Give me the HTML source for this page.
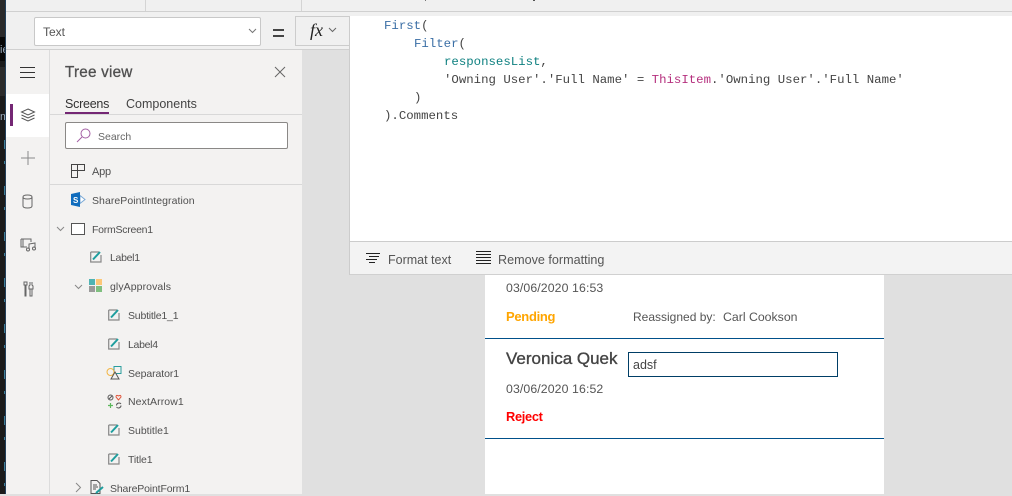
<!DOCTYPE html>
<html><head><meta charset="utf-8">
<style>
html,body{margin:0;padding:0}
body{width:1012px;height:494px;overflow:hidden;position:relative;background:#e0e0e0;font-family:"Liberation Sans",sans-serif;color:#444}
.a{position:absolute}
.t{position:absolute;white-space:nowrap;font-size:11px;line-height:14px;color:#505050}
.c{position:absolute;white-space:pre;font-family:"Liberation Mono",monospace;font-size:12.36px;line-height:18px;color:#444;left:384px}
svg{position:absolute;overflow:visible}
</style></head><body>
<!-- left strip -->
<div class="a" style="left:0;top:0;width:6px;height:494px;background:#1b1b1b"></div>
<div class="a" style="left:0;top:0;width:6px;height:37px;background:#2a2a2a"></div>
<div class="a" style="left:0;top:37px;width:6px;height:24px;background:#080808"></div>
<div class="a" style="left:0;top:67px;width:6px;height:29px;background:#2b2b2b"></div>
<div class="t" style="left:0;top:43px;font-size:11px;color:#9ab;width:6px;overflow:hidden">ie</div>
<div class="t" style="left:0;top:110px;font-size:11px;color:#9ab;width:6px;overflow:hidden">m</div>
<div class="a" style="left:4px;top:140px;width:1px;height:354px;background:repeating-linear-gradient(to bottom,#3f7f99 0 9px,#1b1b1b 9px 21px,#3f7f99 21px 24px,#1b1b1b 24px 46px)"></div>
<div class="a" style="left:5px;top:0;width:1px;height:494px;background:#23405a"></div>
<!-- top bars -->
<div class="a" style="left:6px;top:0;width:1006px;height:49px;background:#f0f0f0"></div>
<div class="a" style="left:6px;top:11px;width:1006px;height:1px;background:#d0d0d0"></div>
<div class="a" style="left:145px;top:0;width:1px;height:11px;background:#d4d4d4"></div>
<div class="a" style="left:301px;top:0;width:1px;height:11px;background:#d4d4d4"></div>
<div class="a" style="left:425px;top:0;width:1px;height:1px;background:#777"></div>
<div class="a" style="left:533px;top:0;width:2px;height:1px;background:#555"></div>
<div class="a" style="left:6px;top:49px;width:344px;height:1px;background:#d0d0d0"></div>
<!-- property dropdown -->
<div class="a" style="left:34px;top:17px;width:225px;height:27px;background:#fff;border:1px solid #c8c8c8;border-radius:2px"></div>
<div class="t" style="left:43px;top:25px;font-size:12px;color:#555">Text</div>
<svg style="left:248px;top:28px" width="10" height="6"><path d="M1 1L4.500 4.500L8 1" fill="none" stroke="#777"/></svg>
<div class="a" style="left:273px;top:29px;width:11px;height:2px;background:#444"></div>
<div class="a" style="left:273px;top:35px;width:11px;height:2px;background:#444"></div>
<div class="a" style="left:295px;top:16px;width:54px;height:28px;background:#f0f0f0;border:1px solid #ccc;box-sizing:content-box"></div>
<div class="a" style="left:310px;top:20px;font:italic 18px/20px 'Liberation Serif',serif;color:#222">fx</div>
<svg style="left:328px;top:27px" width="10" height="6"><path d="M1 1L4.500 4.500L8 1" fill="none" stroke="#666"/></svg>
<!-- icon rail -->
<div class="a" style="left:6px;top:50px;width:44px;height:444px;background:#f3f2f1"></div>
<div class="a" style="left:49px;top:50px;width:1px;height:444px;background:#dcdcdc"></div>
<div class="a" style="left:6px;top:94px;width:43px;height:43px;background:#fff"></div>
<div class="a" style="left:10px;top:104px;width:3px;height:22px;background:#742774"></div>
<svg style="left:20px;top:67px" width="15" height="11"><path d="M0 .5H15M0 5.500H15M0 10.500H15" stroke="#333" fill="none"/></svg>
<svg style="left:20px;top:108px" width="16" height="15"><path d="M8 1L14.500 4L8 7L1.500 4ZM1.500 7L8 10L14.500 7M1.500 10L8 13L14.500 10" fill="none" stroke="#555"/></svg>
<svg style="left:20px;top:150px" width="16" height="16"><path d="M8 1V15M1 8H15" stroke="#8a8a8a" fill="none"/></svg>
<svg style="left:21px;top:194px" width="13" height="15"><path d="M2 3V12Q2 14 6.500 14Q11 14 11 12V3M2 3Q2 1 6.500 1Q11 1 11 3Q11 5 6.500 5Q2 5 2 3Z" fill="none" stroke="#666"/></svg>
<svg style="left:20px;top:238px" width="17" height="14"><path d="M1 1H11V4M1 1V9H7M3 1V9M9 11V6L15 5V10" fill="none" stroke="#666"/><circle cx="8" cy="11.500" r="1.500" fill="none" stroke="#666"/><circle cx="14" cy="10.500" r="1.500" fill="none" stroke="#666"/></svg>
<svg style="left:23px;top:281px" width="11" height="16"><path d="M1 1H4V4H3V15H2V4H1ZM7 1V4L6 5V8H10V5L9 4V1M7 8V15H9V8" fill="none" stroke="#666"/></svg>
<!-- tree panel -->
<div class="a" style="left:50px;top:50px;width:252px;height:444px;background:#f3f2f1"></div>
<div class="a" style="left:302px;top:50px;width:48px;height:444px;background:#e0e0e0"></div>
<div class="t" style="left:65px;top:64px;font-size:15.300px;line-height:18px;color:#505050;letter-spacing:.2px;-webkit-text-stroke:.3px #505050">Tree view</div>
<svg style="left:274px;top:66px" width="12" height="12"><path d="M1 1L11 11M11 1L1 11" stroke="#666" fill="none"/></svg>
<div class="t" style="left:65px;top:96px;font-size:12.500px;line-height:16px;color:#333;letter-spacing:-.25px">Screens</div>
<div class="t" style="left:126px;top:96px;font-size:12.500px;line-height:16px;color:#444">Components</div>
<div class="a" style="left:50px;top:114px;width:252px;height:1px;background:#d8d8d8"></div>
<div class="a" style="left:65px;top:112px;width:44px;height:2px;background:#742774"></div>
<div class="a" style="left:65px;top:122px;width:221px;height:25px;background:#fff;border:1px solid #8a8886;border-radius:2px"></div>
<svg style="left:76px;top:128px" width="15" height="15"><circle cx="9.500" cy="5.500" r="4.500" fill="none" stroke="#a35fa3"/><path d="M6 9L1 14" stroke="#a35fa3" fill="none"/></svg>
<div class="t" style="left:98px;top:130px;font-size:10.500px;color:#666">Search</div>
<svg style="left:71px;top:164px" width="14" height="14"><path d="M.5 6.500H13.500V.5H.5V13.500H6.500V.5" fill="none" stroke="#444"/></svg>
<div class="t" style="left:92px;top:165px;letter-spacing:-.2px">App</div>
<div class="a" style="left:50px;top:184px;width:252px;height:1px;background:#d8d8d8"></div>
<svg style="left:71px;top:192px" width="15" height="15"><path d="M9 3.500L14 7.500L9 11.500Z" fill="#fff" stroke="#7aa9d6"/><path d="M0 2L9 0V15L0 13Z" fill="#0f6cbd"/><text x="2" y="11" font-size="8" font-weight="bold" fill="#fff" font-family="Liberation Sans">S</text></svg>
<div class="t" style="left:92px;top:194px;font-size:10.500px;letter-spacing:.05px">SharePointIntegration</div>
<svg style="left:56px;top:226px" width="10" height="6"><path d="M1 1L4.500 4.500L8 1" fill="none" stroke="#888"/></svg>
<div class="a" style="left:71px;top:223px;width:12px;height:10px;background:#fff;border:1px solid #555"></div>
<div class="t" style="left:92px;top:223px;font-size:10.500px;letter-spacing:-.25px">FormScreen1</div>
<svg style="left:90px;top:250px" width="13" height="13"><path d="M.7 2H9M.7 2V12H11V5" fill="none" stroke="#888" stroke-width="1.200"/><path d="M3 9.500L10 2" stroke="#1f9e9e" stroke-width="2" fill="none"/></svg>
<div class="t" style="left:110px;top:251px;font-size:10.500px;letter-spacing:-.3px">Label1</div>
<svg style="left:74px;top:284px" width="10" height="6"><path d="M1 1L4.500 4.500L8 1" fill="none" stroke="#888"/></svg>
<div class="a" style="left:89px;top:279px;width:6px;height:6px;background:#4fb3b3"></div>
<div class="a" style="left:96px;top:279px;width:6px;height:6px;background:#fcc777"></div>
<div class="a" style="left:89px;top:286px;width:6px;height:6px;background:#9a9a9a"></div>
<div class="a" style="left:96px;top:286px;width:6px;height:6px;background:#7fbf7f"></div>
<div class="t" style="left:110px;top:280px;font-size:10.500px;letter-spacing:.08px">glyApprovals</div>
<svg style="left:108px;top:308px" width="13" height="13"><path d="M.7 2H9M.7 2V12H11V5" fill="none" stroke="#888" stroke-width="1.200"/><path d="M3 9.500L10 2" stroke="#1f9e9e" stroke-width="2" fill="none"/></svg>
<div class="t" style="left:128px;top:309px;font-size:10.500px;letter-spacing:-.2px">Subtitle1_1</div>
<svg style="left:108px;top:337px" width="13" height="13"><path d="M.7 2H9M.7 2V12H11V5" fill="none" stroke="#888" stroke-width="1.200"/><path d="M3 9.500L10 2" stroke="#1f9e9e" stroke-width="2" fill="none"/></svg>
<div class="t" style="left:128px;top:338px;font-size:10.500px;letter-spacing:-.3px">Label4</div>
<svg style="left:106px;top:366px" width="16" height="14"><rect x="8" y=".5" width="7" height="7" fill="none" stroke="#2a9d9d"/><circle cx="4.500" cy="6" r="3.500" fill="none" stroke="#f2b544"/><path d="M5 13L9 6L13 13Z" fill="#f3f2f1" stroke="#555"/></svg>
<div class="t" style="left:128px;top:367px;font-size:10.500px;letter-spacing:-.1px">Separator1</div>
<svg style="left:107px;top:394px" width="15" height="15"><circle cx="3.500" cy="3.500" r="2.500" fill="none" stroke="#555"/><path d="M2 5L5 2" stroke="#555"/><path d="M11.500 6L9 3Q9 1 10.500 1.500L11.500 2L12.500 1.500Q14 1 14 3Z" fill="none" stroke="#e0563c"/><path d="M3.500 9V14M1 11.500H6" stroke="#5cb85c" stroke-width="1.200"/><path d="M9.500 11.500A2.500 2.500 0 0 1 14 10M14 11.500A2.500 2.500 0 0 1 9.500 13" fill="none" stroke="#555"/></svg>
<div class="t" style="left:128px;top:395px;font-size:10.500px;letter-spacing:.1px">NextArrow1</div>
<svg style="left:108px;top:423px" width="13" height="13"><path d="M.7 2H9M.7 2V12H11V5" fill="none" stroke="#888" stroke-width="1.200"/><path d="M3 9.500L10 2" stroke="#1f9e9e" stroke-width="2" fill="none"/></svg>
<div class="t" style="left:128px;top:424px;font-size:10.500px">Subtitle1</div>
<svg style="left:108px;top:452px" width="13" height="13"><path d="M.7 2H9M.7 2V12H11V5" fill="none" stroke="#888" stroke-width="1.200"/><path d="M3 9.500L10 2" stroke="#1f9e9e" stroke-width="2" fill="none"/></svg>
<div class="t" style="left:128px;top:453px;font-size:10.500px;letter-spacing:-.15px">Title1</div>
<svg style="left:75px;top:482px" width="7" height="11"><path d="M1 1L5.500 5.500L1 10" fill="none" stroke="#888"/></svg>
<svg style="left:90px;top:480px" width="15" height="14"><path d="M1 .5H7L10 3.500V13.500H1ZM3 5H7M3 7H8M3 9H6" fill="none" stroke="#555"/><path d="M6 13L13 7" stroke="#1f9e9e" stroke-width="2"/></svg>
<div class="t" style="left:110px;top:482px;font-size:10.500px;letter-spacing:-.15px">SharePointForm1</div>
<!-- formula editor -->
<div class="a" style="left:350px;top:16px;width:662px;height:225px;background:#fff"></div>
<div class="a" style="left:349px;top:16px;width:1px;height:259px;background:#ccc"></div>
<div class="c" style="top:17px;color:#3a6ea5">First<span style="color:#444">(</span></div>
<div class="c" style="top:35px;left:414px;color:#3a6ea5">Filter<span style="color:#444">(</span></div>
<div class="c" style="top:53px;left:444px;color:#0e8080">responsesList<span style="color:#444">,</span></div>
<div class="c" style="top:71px;left:444px">'Owning User'.'Full Name' = <span style="color:#b5307e">ThisItem</span>.'Owning User'.'Full Name'</div>
<div class="c" style="top:89px;left:414px">)</div>
<div class="c" style="top:107px">).Comments</div>
<div class="a" style="left:350px;top:241px;width:662px;height:34px;background:#f3f3f3;border-top:1px solid #ccc;box-sizing:border-box"></div>
<div class="a" style="left:350px;top:274px;width:662px;height:1px;background:#d0d0d0"></div>
<svg style="left:366px;top:253px" width="14" height="11"><path d="M0 .5H14M3 3.500H13M0 6.500H11M3 9.500H9" stroke="#222" fill="none"/></svg>
<div class="t" style="left:388px;top:253px;font-size:12.500px;line-height:15px;color:#555">Format text</div>
<svg style="left:476px;top:251px" width="15" height="13"><path d="M0 .5H15M0 3.500H15M0 6.500H15M0 9.500H15M0 12.500H15" stroke="#222" fill="none"/></svg>
<div class="t" style="left:498px;top:253px;font-size:12.600px;line-height:15px;color:#555">Remove formatting</div>
<!-- canvas -->
<div class="a" style="left:485px;top:275px;width:399px;height:219px;background:#fff"></div>
<div class="t" style="left:506px;top:281px;font-size:12.300px;color:#555;letter-spacing:.1px">03/06/2020 16:53</div>
<div class="t" style="left:506px;top:310px;font-size:13px;font-weight:bold;color:#ffa500;letter-spacing:-.3px">Pending</div>
<div class="t" style="left:633px;top:310px;font-size:12px;color:#555">Reassigned by:</div>
<div class="t" style="left:723px;top:310px;font-size:12.300px;color:#555">Carl Cookson</div>
<div class="a" style="left:485px;top:338px;width:399px;height:1px;background:#00508a"></div>
<div class="t" style="left:506px;top:349px;font-size:17px;line-height:20px;color:#444;-webkit-text-stroke:.35px #444">Veronica Quek</div>
<div class="a" style="left:628px;top:352px;width:208px;height:23px;background:#fff;border:1px solid #003e66"></div>
<div class="t" style="left:633px;top:358px;font-size:12.500px;color:#444">adsf</div>
<div class="t" style="left:506px;top:382px;font-size:12.300px;color:#555;letter-spacing:.1px">03/06/2020 16:52</div>
<div class="t" style="left:506px;top:410px;font-size:12.800px;font-weight:bold;color:#f00;letter-spacing:-.3px">Reject</div>
<div class="a" style="left:485px;top:438px;width:399px;height:1px;background:#00508a"></div>
</body></html>
